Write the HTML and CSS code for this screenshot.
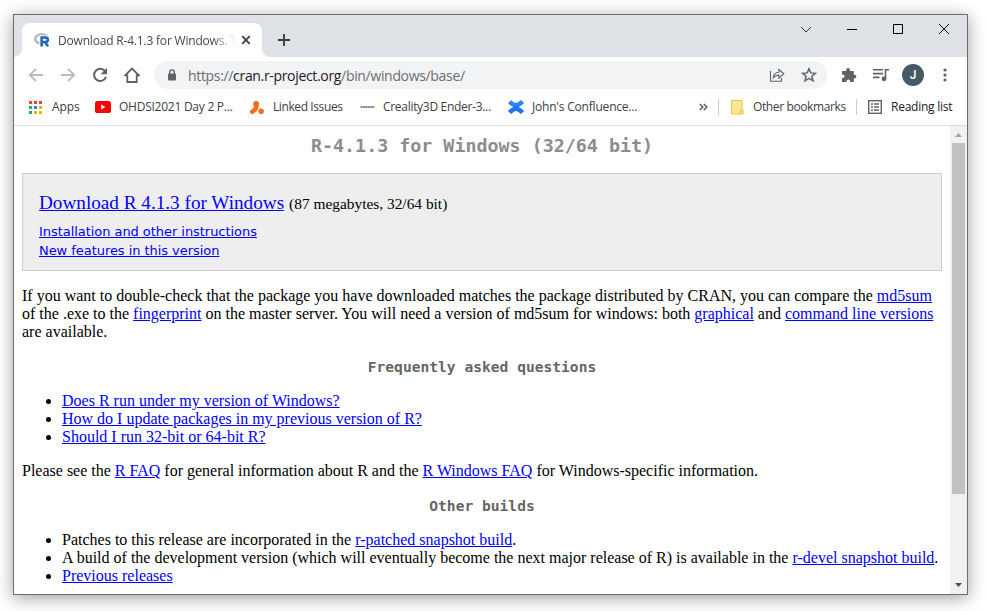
FILE: index.html
```html
<!DOCTYPE html>
<html lang="en">
<head>
<meta charset="utf-8">
<title>Download R-4.1.3 for Windows</title>
<link rel="stylesheet" href="styles.css">
</head>
<body>
<div class="window">
  <header class="tabstrip">
    <div class="tab">
      <svg class="favicon" width="16" height="16" viewBox="0 0 16 16"><ellipse cx="7.8" cy="7" rx="6.7" ry="4.7" fill="none" stroke="#b4b6ba" stroke-width="2.4"/><path d="M7.2 14.6V5.4H11.6a2.4 2.4 0 0 1 .5 4.8L14.6 14.6M7.2 10.3h4" fill="none" stroke="#fff" stroke-width="3.6"/><path d="M7.6 14.4V5.4H11.5a2.3 2.3 0 0 1 0 4.7H7.6M11 10l3 4.4" fill="none" stroke="#2165b6" stroke-width="2.5"/></svg>
      <span class="tab-title">Download R-4.1.3 for Windows. T</span>
      <svg class="tab-close" width="10" height="10" viewBox="0 0 10 10"><path d="M1.2 1.2l7.6 7.6M8.8 1.2L1.2 8.8" stroke="#3c4043" stroke-width="1.8"/></svg>
    </div>
    <svg class="newtab" width="12" height="12" viewBox="0 0 12 12"><path d="M6 0v12M0 6h12" stroke="#3c4043" stroke-width="1.9"/></svg>
    <div class="controls">
      <svg width="46" height="30" viewBox="0 0 46 30"><path d="M18 12l5 5 5-5" fill="none" stroke="#333" stroke-width="1"/></svg>
      <svg width="46" height="30" viewBox="0 0 46 30"><path d="M18 14.5h10" stroke="#000"/></svg>
      <svg width="46" height="30" viewBox="0 0 46 30"><path d="M18.5 9.5h9v9h-9z" fill="none" stroke="#000"/></svg>
      <svg width="46" height="30" viewBox="0 0 46 30"><path d="M18 9l10 10M28 9L18 19" stroke="#111" stroke-width="1"/></svg>
    </div>
  </header>
  <nav class="toolbar">
    <svg class="t-icon" width="16" height="16" viewBox="0 0 16 16"><path d="M15 8H2.5M8 1.8L1.8 8 8 14.2" fill="none" stroke="#b9bbbe" stroke-width="1.8"/></svg>
    <svg class="t-icon" width="16" height="16" viewBox="0 0 16 16"><path d="M1 8h12.5M8 1.8L14.2 8 8 14.2" fill="none" stroke="#b9bbbe" stroke-width="1.8"/></svg>
    <svg class="t-icon" width="16" height="16" viewBox="0 0 16 16"><path d="M13.3 4.6A6.1 6.1 0 1 0 14 9.8" fill="none" stroke="#5f6368" stroke-width="2"/><path d="M15 .8v6.4H8.6z" fill="#5f6368"/></svg>
    <svg class="t-icon" width="16" height="16" viewBox="0 0 16 16"><path d="M8 1.5L1.2 8.4H3.3V15h9.4V8.4h2.1z" fill="none" stroke="#5f6368" stroke-width="1.8"/></svg>
    <div class="omnibox">
      <svg width="10" height="12" viewBox="0 0 10 12"><path d="M2.7 5V3.2a2.3 2.3 0 0 1 4.6 0V5" fill="none" stroke="#5f6368" stroke-width="1.4"/><rect x="1" y="4.4" width="8" height="7.2" rx="1" fill="#5f6368"/></svg>
      <span class="url">https://<b>cran.r-project.org</b>/bin/windows/base/</span>
      <svg class="share" width="16" height="16" viewBox="0 0 16 16"><path d="M1.5 4v10.3h11V11" fill="none" stroke="#5f6368" stroke-width="1.1"/><path d="M4.3 10.8c.3-3.6 2.3-5.4 5.6-5.5V2.5l5 4.3-5 4.2V8.1c-2.6 0-4.2.7-5.6 2.7z" fill="none" stroke="#5f6368" stroke-width="1.1"/></svg>
      <svg width="16" height="16" viewBox="0 0 16 16"><path d="M8 1.7l1.8 4.2 4.6.4-3.5 3 1.1 4.5L8 11.4l-4 2.4 1.1-4.5-3.5-3 4.6-.4z" fill="none" stroke="#5f6368" stroke-width="1.5"/></svg>
    </div>
    <svg class="puzzle" width="16" height="16" viewBox="0 0 16 16"><path d="M1 4h4.2V3a1.9 1.9 0 0 1 3.8 0v1h3.8v3.8h.8a1.8 1.8 0 0 1 0 3.6h-.8V15H9.2v-.8a1.8 1.8 0 0 0-3.6 0v.8H1v-4h.8a1.8 1.8 0 0 0 0-3.6H1z" fill="#5f6368"/></svg>
    <svg class="media" width="16" height="14" viewBox="0 0 16 14"><path d="M0 1.8h10M0 5.6h10M0 9.4h6.5M12.5 10.8V1.8H16" fill="none" stroke="#5f6368" stroke-width="1.6"/><circle cx="11" cy="10.8" r="2.4" fill="#5f6368"/></svg>
    <span class="avatar">J</span>
    <svg class="dots" width="4" height="14" viewBox="0 0 4 14"><g fill="#5f6368"><circle cx="2" cy="2" r="1.6"/><circle cx="2" cy="7" r="1.6"/><circle cx="2" cy="12" r="1.6"/></g></svg>
  </nav>
  <nav class="bookmarks">
    <svg class="apps" width="13" height="13" viewBox="0 0 13 13"><path d="M0 0h3v3H0zM5 0h3v3H5zM10 0h3v3h-3z" fill="#ea4335"/><path d="M0 5h3v3H0zM0 10h3v3H0z" fill="#34a853"/><path d="M5 5h3v3H5z" fill="#1a8cff"/><path d="M10 5h3v3h-3zM5 10h3v3H5zM10 10h3v3h-3z" fill="#fbb405"/></svg>
    <span class="bm bm-apps">Apps</span>
    <svg width="16" height="12" viewBox="0 0 16 12"><rect width="16" height="12" rx="2.6" fill="#f00"/><path d="M6.2 3.6v4.8L10.4 6z" fill="#fff"/></svg>
    <span class="bm bm-video">OHDSI2021 Day 2 P...</span>
    <svg width="14" height="13" viewBox="0 0 14 13"><path d="M2.2 10.8C5 9.400 6.800 7 6.200 3.500" fill="none" stroke="#f37021" stroke-width="4.400" stroke-linecap="round"/><circle cx="6.200" cy="3" r="3" fill="#f37021"/><circle cx="11.100" cy="10.200" r="2.800" fill="#f37021"/></svg>
    <span class="bm bm-issues">Linked Issues</span>
    <svg width="15" height="4" viewBox="0 0 15 4"><path d="M.5 2h14" stroke="#666" stroke-width="1.3" stroke-dasharray="2 .3"/></svg>
    <span class="bm bm-print">Creality3D Ender-3...</span>
    <svg width="16" height="16" viewBox="0 0 16 16"><path d="M1.600 2.600C5.800 7.700 9.800 7.400 14.400 2.400" fill="none" stroke="#2684ff" stroke-width="4.400"/><path d="M1.600 13.600c4.200-5 8.200-5.200 12.800 0" fill="none" stroke="#1f75f0" stroke-width="4.400"/></svg>
    <span class="bm bm-wiki">John's Confluence...</span>
    <svg class="more" width="9" height="8" viewBox="0 0 9 8"><path d="M.8 1L3.8 4l-3 3M4.8 1l3 3-3 3" fill="none" stroke="#5f6368" stroke-width="1.6"/></svg>
    <i class="sep"></i>
    <svg class="folder" width="13" height="15" viewBox="0 0 13 15"><path d="M.5.5h10.6v9.5h1v4H.5z" fill="#ffe793" stroke="#e9c63f"/><path d="M9.5 14v-3.5h2.6" fill="none" stroke="#e9c63f"/></svg>
    <span class="bm bm-other">Other bookmarks</span>
    <i class="sep"></i>
    <svg class="list" width="14" height="14" viewBox="0 0 14 14"><rect x=".7" y=".7" width="12.6" height="12.6" fill="#fff" stroke="#5f6368" stroke-width="1.4"/><path d="M3 4h2M6 4h5M3 7h2M6 7h5M3 10h2M6 10h5" stroke="#5f6368" stroke-width="1.5"/></svg>
    <span class="bm bm-reading">Reading list</span>
  </nav>
  <div class="viewport">
    <main class="page">
      <h1>R-4.1.3 for Windows (32/64 bit)</h1>
      <section class="download">
        <p class="primary"><a class="big">Download R 4.1.3 for Windows</a> <span class="size">(87 megabytes, 32/64 bit)</span></p>
        <p class="small"><a>Installation and other instructions</a><br><a>New features in this version</a></p>
      </section>
      <p><span class="line">If you want to double-check that the package you have downloaded matches the package distributed by CRAN, you can compare the <a>md5sum</a></span> <span class="line">of the .exe to the <a>fingerprint</a> on the master server. You will need a version of md5sum for windows: both <a>graphical</a> and <a>command line versions</a></span> <span class="line">are available.</span></p>
      <h3>Frequently asked questions</h3>
      <ul>
        <li><a>Does R run under my version of Windows?</a></li>
        <li><a>How do I update packages in my previous version of R?</a></li>
        <li><a>Should I run 32-bit or 64-bit R?</a></li>
      </ul>
      <p>Please see the <a>R FAQ</a> for general information about R and the <a>R Windows FAQ</a> for Windows-specific information.</p>
      <h3>Other builds</h3>
      <ul>
        <li>Patches to this release are incorporated in the <a>r-patched snapshot build</a>.</li>
        <li>A build of the development version (which will eventually become the next major release of R) is available in the <a>r-devel snapshot build</a>.</li>
        <li><a>Previous releases</a></li>
      </ul>
    </main>
    <div class="scrollbar">
      <svg width="17" height="17" viewBox="0 0 17 17"><path d="M5 11h7L8.500 7z" fill="#a3a3a3"/></svg>
      <div class="track"><div class="thumb"></div></div>
      <svg width="17" height="17" viewBox="0 0 17 17"><path d="M5 6h7L8.500 10z" fill="#505050"/></svg>
    </div>
  </div>
</div>
</body>
</html>
```
FILE: styles.css
```css
* { box-sizing: border-box; }
body { margin: 0; padding: 14px 0 0 13px; height: 611px; overflow: hidden; background: #fff; font-family: "Open Sans", sans-serif; }
svg { display: block; flex: none; }
.window { width: 955px; height: 581px; border: 1px solid #6d6d6f; background: #fff; display: flex; flex-direction: column; box-shadow: 0 3px 16px rgba(0,0,0,.38); }

.tabstrip { height: 42px; background: #dee1e6; display: flex; flex: none; }
.tab { position: relative; width: 240px; height: 34px; margin: 8px 0 0 8px; background: #fff; border-radius: 8px 8px 0 0; display: flex; align-items: center; padding: 0 11px 0 12px; }
.tab::before, .tab::after { content: ""; position: absolute; bottom: 0; width: 8px; height: 8px; }
.tab::before { left: -8px; background: radial-gradient(circle at 0 0, #dee1e6 7.5px, #fff 8px); }
.tab::after { right: -8px; background: radial-gradient(circle at 100% 0, #dee1e6 7.5px, #fff 8px); }
.tab-title { margin-left: 8px; width: 178px; white-space: nowrap; font-size: 12px; letter-spacing: -.19px; color: #45494d; -webkit-mask-image: linear-gradient(90deg, #000 155px, transparent 178px); mask-image: linear-gradient(90deg, #000 155px, transparent 178px); }
.tab-close { margin-left: auto; }
.newtab { margin: 19px 0 0 16px; }
.controls { display: flex; margin-left: auto; }

.toolbar { height: 36px; flex: none; display: flex; align-items: center; padding: 0 18px 0 14px; }
.t-icon { margin-right: 16px; }
.omnibox { width: 673px; height: 28px; margin-left: -2px; border-radius: 14px; background: #f1f3f4; display: flex; align-items: center; padding: 0 10px 0 13px; }
.url { margin-left: 11px; font-size: 14px; letter-spacing: -.33px; color: #6a6e73; white-space: nowrap; }
.url b { font-weight: 400; color: #202124; }
.share { margin-left: auto; margin-right: 16px; }
.puzzle { margin-left: 14px; }
.media { margin-left: 16px; }
.avatar { width: 22px; height: 22px; margin-left: 13px; border-radius: 50%; background: #455a64; color: #fff; font: 500 12px/22px Roboto, sans-serif; text-align: center; }
.dots { margin-left: 19px; }

.bookmarks { height: 33px; flex: none; display: flex; align-items: center; padding: 0 0 4px 15px; border-bottom: 1px solid #dadce0; }
.bm { font-size: 12px; line-height: 16px; color: #3c4043; white-space: nowrap; margin-left: 8px; letter-spacing: -.25px; }
.bm-apps { width: 43px; margin-left: 10px; letter-spacing: -.1px; }
.bm-video { width: 131px; }
.bm-issues { width: 87px; margin-left: 9px; letter-spacing: -.4px; }
.bm-print { width: 125px; letter-spacing: -.3px; }
.bm-wiki { width: 105px; letter-spacing: -.2px; }
.more { margin-left: auto; margin-right: 10px; }
.sep { width: 1px; height: 16px; background: #cacdd1; }
.folder { margin-left: 12px; }
.bm-other { width: 103px; margin-left: 9px; letter-spacing: -.38px; }
.list { margin-left: 11px; }
.bm-reading { width: 76px; margin-left: 9px; color: #202124; letter-spacing: -.25px; }

.viewport { flex: 1; min-height: 0; display: flex; }
.page { flex: 1; min-width: 0; overflow: hidden; padding: 8px; font: 16px/18px "Liberation Serif", serif; color: #000; }
h1 { margin: 0; font: bold 18.33px/23px "DejaVu Sans Mono", monospace; color: #8c8c8c; text-align: center; }
h3 { margin: 16px 0; font: bold 14.6px/19px "DejaVu Sans Mono", monospace; color: #666; text-align: center; }
a { color: #00f; text-decoration: underline; }
.download { height: 98px; margin: 16px 0; border: 1px solid #ccc; background: #eee; padding: 18px 16px; }
.page p { margin: 0 0 16px; }
.page .primary { margin: 0; line-height: 22px; }
.big { font-size: 19.2px; }
.size { font-size: 15.4px; margin-left: 1px; }
.page .small { margin: 7px 0 0; font: 13px/19px "DejaVu Sans", sans-serif; letter-spacing: -.05px; }
.line { display: block; white-space: nowrap; }
ul { margin: 16px 0; padding-left: 40px; }
li { white-space: nowrap; }
.scrollbar { width: 17px; flex: none; background: #f1f1f1; display: flex; flex-direction: column; }
.track { flex: 1; display: flex; justify-content: center; }
.thumb { width: 13px; height: 351px; background: #c1c1c1; }
```
